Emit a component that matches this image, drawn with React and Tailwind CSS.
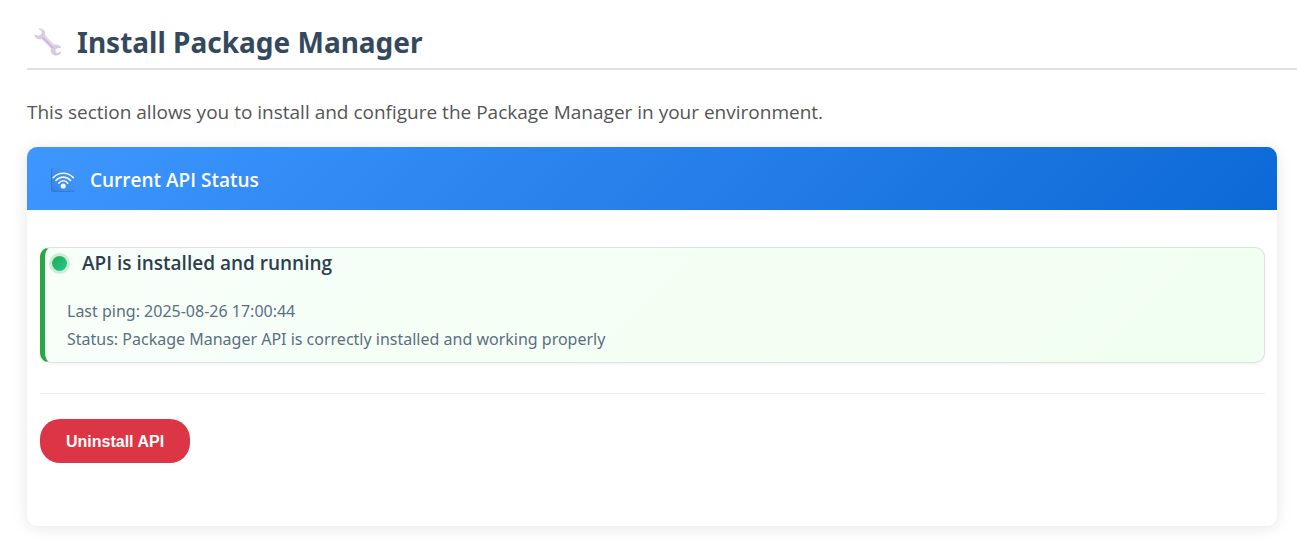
function WrenchIcon() {
  return (
    <svg viewBox="0 0 28 28" className="size-7 shrink-0" aria-hidden="true">
      <defs>
        <linearGradient id="wrench" x1="0" y1="0" x2="1" y2="1">
          <stop offset="0" stopColor="#d3cdd8" />
          <stop offset="0.5" stopColor="#dccfee" />
          <stop offset="1" stopColor="#cfc8d6" />
        </linearGradient>
      </defs>
      <path
        d="M5.500 0.500C8.800.2 11.300 2.600 11.300 5.600c0 .6-.1 1.200-.3 1.700L20.400 16.700c.5-.2 1.100-.3 1.700-.3 2.400 0 4.400 1.400 5.100 3.500l-3.900.2-1.900 2 .5 2.200 1.900.6 3.600-1.600c-.3 2.600-2.700 4.300-5.300 4.300-3.200 0-5.400-2.400-5.400-5.300 0-.6.1-1.200.3-1.800L7.600 11.100c-.5.200-1.100.300-1.700.300C2.700 11.400.3 9 .3 6.200l4 1.600 2.700-1.200.9-2.500-.9-1.700L4.200 1z"
        fill="url(#wrench)"
      />
      <path d="M8.800 9.600l9.800 9.800" stroke="#c9b3e4" strokeWidth="1.400" strokeLinecap="round" />
      <path d="M10.200 7.900l9.600 9.600" stroke="#ebe4f4" strokeWidth="1" strokeLinecap="round" />
    </svg>
  );
}

function WirelessIcon() {
  return (
    <svg viewBox="0 0 24 24" className="size-6 shrink-0" aria-hidden="true">
      <defs>
        <linearGradient id="tile" x1="0" y1="1" x2="1" y2="0">
          <stop offset="0" stopColor="#3480e6" />
          <stop offset="0.250" stopColor="#3b8cec" />
          <stop offset="1" stopColor="#4795f2" />
        </linearGradient>
      </defs>
      <rect width="24" height="24" rx="2.500" fill="#3379dc" />
      <rect x="1" width="23" height="23" rx="2.500" fill="url(#tile)" />
      <g fill="none" stroke="#eef6ff" strokeWidth="1.600" strokeLinecap="round">
        <path d="M2.200 9.600c5.500-5.900 14.600-5.900 20.100 0" />
        <path d="M4.900 12.500c4.100-4.500 10.600-4.500 14.700 0" />
        <path d="M7.700 15.200c2.600-3.200 6.500-3.200 9.100 0" />
      </g>
      <circle cx="12.200" cy="18" r="2.600" fill="#f4f9ff" />
    </svg>
  );
}

export default function App() {
  return (
    <main className="bg-white pt-5 pb-7 pl-[27px] font-['Open_Sans','Noto_Sans',sans-serif]">
      <h1 className="flex h-[50px] items-start gap-[15px] border-b-2 border-[#dee2e6] pl-[7px] font-['Noto_Sans',sans-serif] text-[28px] leading-[44px] font-bold text-[#34495e]">
        <span className="flex h-11 items-center">
          <WrenchIcon />
        </span>
        Install Package Manager
      </h1>
      <p className="pt-7 text-[19px] leading-7 text-[#555555]">
        This section allows you to install and configure the Package Manager in your environment.
      </p>

      <section className="mt-[21px] mr-5 overflow-hidden rounded-[10px] bg-white shadow-[0_2px_15px_rgba(0,0,0,0.1)]">
        <h2 className="flex h-[63px] items-center gap-[15px] bg-linear-135 from-[#3d97ff] to-[#0b69d6] px-6 pt-0.5 text-[19px] leading-7 font-semibold text-white">
          <WirelessIcon />
          Current API Status
        </h2>
        <div className="px-3 pt-[37px] pb-[63px] pl-[13px]">
          <div className="rounded-[10px] border border-l-[5px] border-[#dee2e6] border-l-[#28a745] bg-linear-135 from-[#f8fff9] to-[#f0fff0] pb-[9px] shadow-[0_1px_4px_rgba(0,0,0,0.06)]">
            <h3 className="flex items-center gap-[15px] pl-[7px] text-[19px] leading-[30px] font-semibold text-[#2c3e50]">
              <span className="size-[15px] rounded-full bg-linear-135 from-[#28a745] to-[#20c997] ring-3 ring-[#28a745]/20" />
              API is installed and running
            </h3>
            <div className="pt-[19px] pl-[22px] font-['Noto_Sans',sans-serif] text-[16px] leading-7 text-[#5c6f82]">
              <p>Last ping: 2025-08-26 17:00:44</p>
              <p>Status: Package Manager API is correctly installed and working properly</p>
            </div>
          </div>
          <div className="mt-[30px] border-t border-[#e9ecef] pt-[25px]">
            <button
              type="button"
              className="h-11 rounded-[20px] bg-[#dc3545] px-[26px] pt-0.5 font-['Liberation_Sans',Arial,sans-serif] text-[16px] font-bold text-white"
            >
              Uninstall API
            </button>
          </div>
        </div>
      </section>
    </main>
  );
}
